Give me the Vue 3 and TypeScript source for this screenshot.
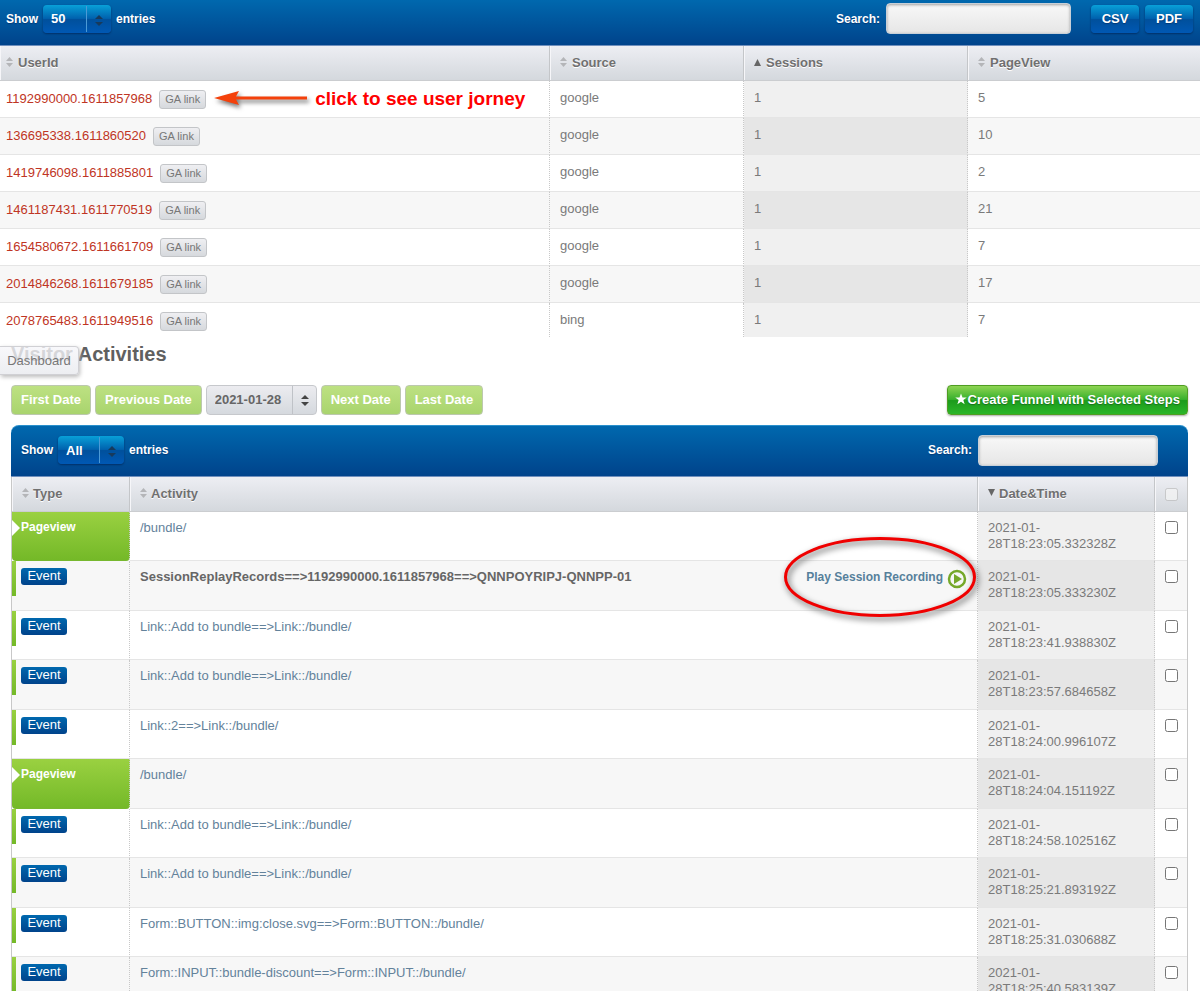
<script setup lang="ts">
import { ref } from 'vue'

interface Visitor {
  id: string
  source: string
  sessions: number
  pageViews: number
}

interface Activity {
  type: 'Pageview' | 'Event'
  text: string
  time: string
  recording?: boolean
}

const visitors: Visitor[] = [
  { id: '1192990000.1611857968', source: 'google', sessions: 1, pageViews: 5 },
  { id: '136695338.1611860520', source: 'google', sessions: 1, pageViews: 10 },
  { id: '1419746098.1611885801', source: 'google', sessions: 1, pageViews: 2 },
  { id: '1461187431.1611770519', source: 'google', sessions: 1, pageViews: 21 },
  { id: '1654580672.1611661709', source: 'google', sessions: 1, pageViews: 7 },
  { id: '2014846268.1611679185', source: 'google', sessions: 1, pageViews: 17 },
  { id: '2078765483.1611949516', source: 'bing', sessions: 1, pageViews: 7 },
]

const activities: Activity[] = [
  { type: 'Pageview', text: '/bundle/', time: '18:23:05.332328Z' },
  { type: 'Event', text: 'SessionReplayRecords==>1192990000.1611857968==>QNNPOYRIPJ-QNNPP-01', time: '18:23:05.333230Z', recording: true },
  { type: 'Event', text: 'Link::Add to bundle==>Link::/bundle/', time: '18:23:41.938830Z' },
  { type: 'Event', text: 'Link::Add to bundle==>Link::/bundle/', time: '18:23:57.684658Z' },
  { type: 'Event', text: 'Link::2==>Link::/bundle/', time: '18:24:00.996107Z' },
  { type: 'Pageview', text: '/bundle/', time: '18:24:04.151192Z' },
  { type: 'Event', text: 'Link::Add to bundle==>Link::/bundle/', time: '18:24:58.102516Z' },
  { type: 'Event', text: 'Link::Add to bundle==>Link::/bundle/', time: '18:25:21.893192Z' },
  { type: 'Event', text: 'Form::BUTTON::img:close.svg==>Form::BUTTON::/bundle/', time: '18:25:31.030688Z' },
  { type: 'Event', text: 'Form::INPUT::bundle-discount==>Form::INPUT::/bundle/', time: '18:25:40.583139Z' },
]

const visitorPageSize = ref('50')
const activityPageSize = ref('All')
const visitorSearch = ref('')
const activitySearch = ref('')
const day = ref('2021-01-28')
const steps = ref<number[]>([])
</script>

<template>
  <div class="page">
    <section class="visitors">
      <div class="toolbar">
        <label for="visitor-size">Show</label>
        <span class="pick pick-blue">
          <select id="visitor-size" v-model="visitorPageSize">
            <option>50</option>
            <option>All</option>
          </select>
          <svg class="arrows" viewBox="0 0 8 12"><path d="M4 0 8 4H0z M0 7h8L4 11z" /></svg>
        </span>
        <span>entries</span>
        <label class="search-label" for="visitor-search">Search:</label>
        <input id="visitor-search" v-model="visitorSearch" class="search" type="text" />
        <div class="exports">
          <button type="button">CSV</button>
          <button type="button">PDF</button>
        </div>
      </div>
      <table class="grid">
        <colgroup>
          <col />
          <col class="c-source" />
          <col class="c-sessions" />
          <col class="c-views" />
        </colgroup>
        <thead>
          <tr>
            <th><svg class="sort" viewBox="0 0 7 10"><path d="M3.5 0 7 4H0z M0 6h7L3.5 10z" /></svg>UserId</th>
            <th><svg class="sort" viewBox="0 0 7 10"><path d="M3.5 0 7 4H0z M0 6h7L3.5 10z" /></svg>Source</th>
            <th><svg class="sort on" viewBox="0 0 7 10"><path d="M3.5 2 7 9H0z" /></svg>Sessions</th>
            <th><svg class="sort" viewBox="0 0 7 10"><path d="M3.5 0 7 4H0z M0 6h7L3.5 10z" /></svg>PageView</th>
          </tr>
        </thead>
        <tbody>
          <tr v-for="(v, i) in visitors" :key="v.id">
            <td>
              <div class="user">
                <a class="user-id" href="#">{{ v.id }}</a>
                <a class="ga" href="#">GA link</a>
                <template v-if="i === 0">
                  <svg class="pointer" viewBox="0 0 100 24">
                    <path d="M1 11 26 4 23 9.500H94v3H23L26 18z" />
                  </svg>
                  <strong class="hint">click to see user jorney</strong>
                </template>
              </div>
            </td>
            <td>{{ v.source }}</td>
            <td class="sorted">{{ v.sessions }}</td>
            <td>{{ v.pageViews }}</td>
          </tr>
        </tbody>
      </table>
    </section>

    <section class="journey">
      <h2>Visitor Activities</h2>
      <button type="button" class="dashboard">Dashboard</button>

      <div class="dates">
        <button type="button" class="soft">First Date</button>
        <button type="button" class="soft">Previous Date</button>
        <span class="pick pick-grey">
          <select v-model="day" aria-label="Date">
            <option>2021-01-28</option>
          </select>
          <svg class="arrows" viewBox="0 0 8 12"><path d="M4 0 8 4H0z M0 7h8L4 11z" /></svg>
        </span>
        <button type="button" class="soft">Next Date</button>
        <button type="button" class="soft">Last Date</button>
        <button type="button" class="funnel">
          <svg viewBox="0 0 24 24"><path d="M12 1l3 8h8.500l-6.800 5.200 2.600 8.300L12 17.500l-7.300 5 2.600-8.300L.5 9H9z" /></svg>Create Funnel with Selected Steps
        </button>
      </div>

      <div class="panel">
        <div class="toolbar tall">
          <label for="activity-size">Show</label>
          <span class="pick pick-blue">
            <select id="activity-size" v-model="activityPageSize">
              <option>All</option>
              <option>50</option>
            </select>
            <svg class="arrows" viewBox="0 0 8 12"><path d="M4 0 8 4H0z M0 7h8L4 11z" /></svg>
          </span>
          <span>entries</span>
          <label class="search-label" for="activity-search">Search:</label>
          <input id="activity-search" v-model="activitySearch" class="search" type="text" />
        </div>
        <table class="grid log">
          <colgroup>
            <col class="c-type" />
            <col />
            <col class="c-time" />
            <col class="c-check" />
          </colgroup>
          <thead>
            <tr>
              <th><svg class="sort" viewBox="0 0 7 10"><path d="M3.5 0 7 4H0z M0 6h7L3.5 10z" /></svg>Type</th>
              <th><svg class="sort" viewBox="0 0 7 10"><path d="M3.5 0 7 4H0z M0 6h7L3.5 10z" /></svg>Activity</th>
              <th><svg class="sort on" viewBox="0 0 7 10"><path d="M0 1h7L3.500 8z" /></svg>Date&amp;Time</th>
              <th><input type="checkbox" disabled aria-label="Select all steps" /></th>
            </tr>
          </thead>
          <tbody>
            <tr v-for="(a, i) in activities" :key="i">
              <td :class="a.type === 'Pageview' ? 'view' : 'event'">
                <span class="tag">{{ a.type }}</span>
              </td>
              <td>
                <div v-if="a.recording" class="recording">
                  <strong>{{ a.text }}</strong>
                  <a class="play" href="#">
                    Play Session Recording
                    <svg class="play-icon" viewBox="0 0 20 20">
                      <circle cx="10" cy="10" r="8" />
                      <path d="M7 5 15 10 7 15z" />
                    </svg>
                    <svg class="ring" viewBox="0 0 204 92">
                      <ellipse cx="100" cy="42" rx="94.500" ry="38.500" />
                    </svg>
                  </a>
                </div>
                <a v-else class="step" href="#">{{ a.text }}</a>
              </td>
              <td class="sorted">2021-01-<br />28T{{ a.time }}</td>
              <td><input v-model="steps" type="checkbox" :value="i" :aria-label="`Select step ${i + 1}`" /></td>
            </tr>
          </tbody>
        </table>
      </div>
    </section>
  </div>
</template>

<style>
body {
  margin: 0;
  background: #fff;
}
</style>

<style scoped>
.page {
  height: 100vh;
  overflow: hidden;
  font: 13px/16px "Liberation Sans", Arial, sans-serif;
  color: #7a7a7a;
}

.page * {
  box-sizing: border-box;
}

button,
select,
input {
  font-family: inherit;
  margin: 0;
}

a {
  text-decoration: none;
}

.toolbar {
  display: flex;
  align-items: center;
  height: 46px;
  padding: 0 7px 8px 6px;
  border-bottom: 1px solid #6f8fbd;
  background: linear-gradient(#0068ae, #00438b);
  color: #fff;
  font-size: 12px;
  font-weight: bold;
  text-shadow: 0 1px 1px #003a78;
}

.toolbar.tall {
  height: 52px;
  padding: 0 30px 2px 10px;
  border-top: 1px solid #2a90cc;
  border-radius: 8px 8px 0 0;
}

.pick {
  position: relative;
  display: inline-flex;
  margin: 0 5px;
}

.pick select {
  appearance: none;
  border: 0;
  border-radius: 4px;
  padding: 0 8px;
  font-size: 13px;
  font-weight: bold;
}

.pick::after {
  content: "";
  position: absolute;
  top: 1px;
  bottom: 1px;
  right: 24px;
  width: 1px;
  background: #4c9ad6;
}

.pick-blue select {
  width: 68px;
  height: 28px;
  color: #fff;
  background: linear-gradient(#08a0d8, #0062ae 48%, #00509c 52%, #0058b4);
  box-shadow: 0 1px 2px #002f66;
}

.tall .pick-blue select {
  width: 66px;
}

.arrows {
  position: absolute;
  right: 8px;
  top: 10px;
  width: 8px;
  height: 12px;
  fill: #173a5c;
  pointer-events: none;
}

.search-label {
  margin-left: auto;
  margin-right: 6px;
  font-weight: bold;
}

.search {
  width: 185px;
  height: 31px;
  padding: 0 8px;
  border: 1px solid #c8d0d8;
  border-radius: 4px;
  background: linear-gradient(#f8f8f8, #e6e6e6);
  box-shadow: inset 0 1px 3px #a0a0a0;
  font-size: 13px;
}

.tall .search {
  width: 180px;
}

.exports {
  display: flex;
  gap: 6px;
  margin-left: 20px;
}

.exports button {
  width: 48px;
  height: 28px;
  padding: 0;
  border: 0;
  border-radius: 4px;
  color: #fff;
  background: linear-gradient(#08a0d8, #0062ae 48%, #00509c 52%, #0058b4);
  box-shadow: 0 1px 2px #002f66;
  font-size: 13px;
  font-weight: bold;
  text-shadow: 0 1px 1px #003a78;
}

.grid {
  width: 100%;
  table-layout: fixed;
  border-collapse: separate;
  border-spacing: 0;
}

.c-source { width: 194px; }
.c-sessions { width: 224px; }
.c-views { width: 232px; }
.c-type { width: 118px; }
.c-time { width: 177px; }
.c-check { width: 32px; }

.grid th {
  height: 35px;
  padding: 0 10px;
  border-right: 1px solid #c4c6c9;
  border-bottom: 1px solid #cbcdd0;
  background: linear-gradient(#edeef3, #d4d8dd);
  box-shadow: inset 1px 0 0 #f6f6f9;
  color: #707070;
  font-size: 13px;
  text-align: left;
  text-shadow: 0 1px 0 #fff;
}

.grid th:last-child,
.grid td:last-child {
  border-right: 0;
}

.sort {
  width: 7px;
  height: 10px;
  margin-right: 5px;
  fill: #b4b5b8;
}

.sort.on {
  fill: #666;
}

.log .sort {
  margin-right: 4px;
}

.grid td {
  height: 37px;
  padding: 8px 10px 7px;
  border-right: 1px dotted #c8c8c8;
  border-bottom: 1px solid #e5e5e5;
  vertical-align: top;
}

.grid tbody tr:nth-child(even) {
  background: #f7f7f7;
}

.sorted {
  background: #f0f0f0;
}

.grid tr:nth-child(even) .sorted {
  background: #e6e6e6;
}

.visitors td {
  line-height: 18px;
}

.visitors th:first-child,
.visitors td:first-child {
  padding-left: 6px;
}

.visitors tbody tr:last-child td {
  height: 34px;
  padding-bottom: 6px;
  border-bottom: 0;
}

.user {
  display: flex;
  align-items: center;
  height: 20px;
}

.user-id {
  color: #bf3524;
}

.ga {
  height: 19px;
  margin-left: 7px;
  padding: 0 5px;
  border: 1px solid #c3c5c8;
  border-radius: 3px;
  background: linear-gradient(#efeff2, #d6d9dd);
  color: #777;
  font-size: 11px;
  line-height: 17px;
}

.pointer {
  width: 100px;
  height: 24px;
  margin-left: 7px;
  fill: #f4410b;
  filter: drop-shadow(2px 3px 2px #777);
}

.hint {
  margin-left: 2px;
  color: #f00;
  font-size: 19px;
  white-space: nowrap;
}

.journey {
  position: relative;
  padding: 5px 12px 0 11px;
}

.journey h2 {
  margin: 0;
  color: #606060;
  font-size: 20px;
  line-height: 24px;
}

.dashboard {
  position: absolute;
  top: 9px;
  left: 0;
  height: 29px;
  width: 79px;
  padding: 0;
  border: 1px solid #d0d0d4;
  border-left: 0;
  border-radius: 0 4px 4px 0;
  background: linear-gradient(rgba(246, 246, 250, 0.8), rgba(232, 234, 238, 0.8));
  box-shadow: 1px 2px 4px #bbb;
  color: #777;
  font-size: 13px;
}

.dates {
  display: flex;
  gap: 4px;
  margin-top: 19px;
}

.dates button {
  height: 30px;
  padding: 0 10px 2px;
  border-radius: 4px;
  color: #fff;
  font-size: 13px;
  font-weight: bold;
}

.dates .soft {
  padding: 0 9px 2px;
  border: 1px solid #bcc8ae;
  background: linear-gradient(#bde182, #a9d46e);
}

.pick-grey {
  margin: 0;
}

.pick-grey select {
  width: 111px;
  height: 30px;
  padding-bottom: 2px;
  border: 1px solid #c6c8cc;
  color: #666;
  background: linear-gradient(#ececf0, #d5d9de);
}

.pick-grey::after {
  background: #bfc2c7;
}

.pick-grey .arrows {
  fill: #444;
}

.dates .funnel {
  display: flex;
  align-items: center;
  gap: 1px;
  margin-left: auto;
  padding: 0 7px 2px;
  border: 1px solid #4f9d22;
  background: linear-gradient(#8ed452, #38b02c 48%, #1c9b1c 52%, #2bb629);
  box-shadow: 0 1px 2px #aaa;
  text-shadow: 0 1px 1px #16701a;
}

.funnel svg {
  width: 12px;
  height: 12px;
  fill: #fff;
}

.panel {
  margin-top: 10px;
}

.log {
  border-left: 1px solid #c8c8c8;
  border-right: 1px solid #c8c8c8;
}

.log td {
  height: 49px;
}

.log tr:nth-child(even) td {
  height: 50px;
}

.log th:last-child,
.log td:last-child {
  padding: 9px 0 0;
  text-align: center;
  vertical-align: top;
}

.log th:last-child input {
  margin-top: 2px;
}

.log input {
  width: 13px;
  height: 13px;
}

.log .view {
  position: relative;
  padding-top: 7px;
  padding-left: 9px;
  border-bottom-color: #77b82e;
  border-radius: 0 0 4px 4px;
  background: linear-gradient(#9ad141, #74b928);
  color: #fff;
  font-weight: bold;
  font-size: 12px;
}

.view::before {
  content: "";
  position: absolute;
  left: 0;
  top: 8px;
  border: 8px solid transparent;
  border-left-color: #fff;
  border-right-width: 0;
}

.log .event {
  padding: 7px 9px;
  background: linear-gradient(#98d040, #74b928) no-repeat 0 0 / 4px 35px;
}

.event .tag {
  display: block;
  width: 46px;
  height: 17px;
  border-radius: 3px;
  background: linear-gradient(#0068ae, #00438b);
  color: #fff;
  text-align: center;
}

.step {
  color: #63829b;
}

.recording {
  display: flex;
  justify-content: space-between;
  height: 16px;
  color: #666;
}

.play {
  position: relative;
  display: flex;
  gap: 4px;
  color: #56809b;
  font-size: 12px;
  font-weight: bold;
}

.play-icon {
  width: 20px;
  height: 20px;
  fill: #76a82a;
}

.play-icon circle {
  fill: none;
  stroke: #76a82a;
  stroke-width: 2.500;
}

.ring {
  position: absolute;
  right: -17px;
  top: -34px;
  width: 204px;
  height: 92px;
  fill: none;
  stroke: #f00000;
  stroke-width: 3;
  filter: drop-shadow(2px 3px 3px #555);
  pointer-events: none;
}
</style>
